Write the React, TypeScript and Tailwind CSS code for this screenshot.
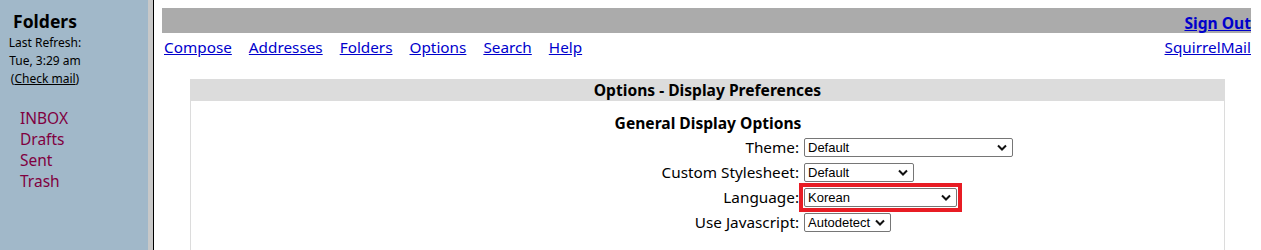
import { ReactNode } from 'react';

const Chevron = () => (
  <svg width="10" height="7" viewBox="0 0 10 7" className="shrink-0">
    <path d="M1 1.5 L5 5.5 L9 1.5" fill="none" stroke="#111" strokeWidth="2" />
  </svg>
);

const FakeSelect = ({ value, width }: { value: string; width: string }) => (
  <div
    className={`${width} h-[19px] flex items-center justify-between border border-[#767676] rounded-[2px] bg-white pl-[3px] pr-[5px] text-[13px] text-black font-['Liberation_Sans',Arial,sans-serif]`}
  >
    <span>{value}</span>
    <Chevron />
  </div>
);

const Row = ({ label, children }: { label: string; children: ReactNode }) => (
  <div className="grid grid-cols-[609px_1fr] h-[25px] items-center">
    <div className="text-right pr-[1px]">{label}</div>
    <div className="flex items-center h-[25px]">{children}</div>
  </div>
);

const Sidebar = () => (
  <aside className="w-[148px] shrink-0 bg-[#a1b8c9] pt-[9px] text-black">
    <div className="w-[90px] text-center">
      <div className="text-[17.5px] font-bold leading-[24px]">Folders</div>
      <div className="text-[12px] leading-[18px] mt-[1px]">
        <div>Last Refresh:</div>
        <div>Tue, 3:29 am</div>
        <div>
          (<a className="underline">Check mail</a>)
        </div>
      </div>
    </div>
    <ul className="mt-[20px] pl-[20px] text-[15.5px] leading-[21px] text-[#800040]">
      <li>INBOX</li>
      <li>Drafts</li>
      <li>Sent</li>
      <li>Trash</li>
    </ul>
  </aside>
);

export default function App() {
  const links = ['Compose', 'Addresses', 'Folders', 'Options', 'Search', 'Help'];

  return (
    <div className="h-[250px] overflow-hidden flex bg-white font-['Noto_Sans','Noto_Sans_CJK_KR',sans-serif] text-black">
      <Sidebar />
      <div className="w-[5px] shrink-0 bg-[#c8c8c8]" />
      <div className="w-[1px] shrink-0 bg-black" />

      <main className="flex-1 pl-[8px] pr-[10px] pt-[8px]">
        {/* top bar */}
        <div className="h-[25px] bg-[#ababab] flex items-end justify-end">
          <a className="text-[15.6px] font-bold leading-[20px] text-[#0000cc] underline">Sign Out</a>
        </div>

        {/* nav */}
        <div className="flex justify-between items-center h-[28px] text-[15.3px] text-[#0000cc]">
          <nav className="flex gap-[17px] pl-[2px]">
            {links.map((l) => (
              <a key={l} className="underline">
                {l}
              </a>
            ))}
          </nav>
          <a className="underline">SquirrelMail</a>
        </div>

        {/* options panel */}
        <section className="mt-[18px] ml-[28px] w-[1035px] border-x border-[#dcdcdc] h-[200px]">
          <div className="h-[22px] bg-[#dcdcdc] text-center font-bold text-[15.6px] leading-[22px]">
            Options - Display Preferences
          </div>
          <div className="text-center font-bold text-[15.6px] mt-[10px] leading-[24px] pl-[1px]">
            General Display Options
          </div>
          <div className="text-[15.3px]">
            <Row label="Theme:">
              <div className="ml-[4px]">
                <FakeSelect value="Default" width="w-[209px]" />
              </div>
            </Row>
            <Row label="Custom Stylesheet:">
              <div className="ml-[4px]">
                <FakeSelect value="Default" width="w-[110px]" />
              </div>
            </Row>
            <Row label="Language:">
              <div className="-ml-[1px] -my-[5px] border-4 border-[#e81c24] p-[1px] bg-white">
                <FakeSelect value="Korean" width="w-[153px]" />
              </div>
            </Row>
            <Row label="Use Javascript:">
              <div className="ml-[4px]">
                <FakeSelect value="Autodetect" width="w-[87px]" />
              </div>
            </Row>
          </div>
        </section>
      </main>
    </div>
  );
}
